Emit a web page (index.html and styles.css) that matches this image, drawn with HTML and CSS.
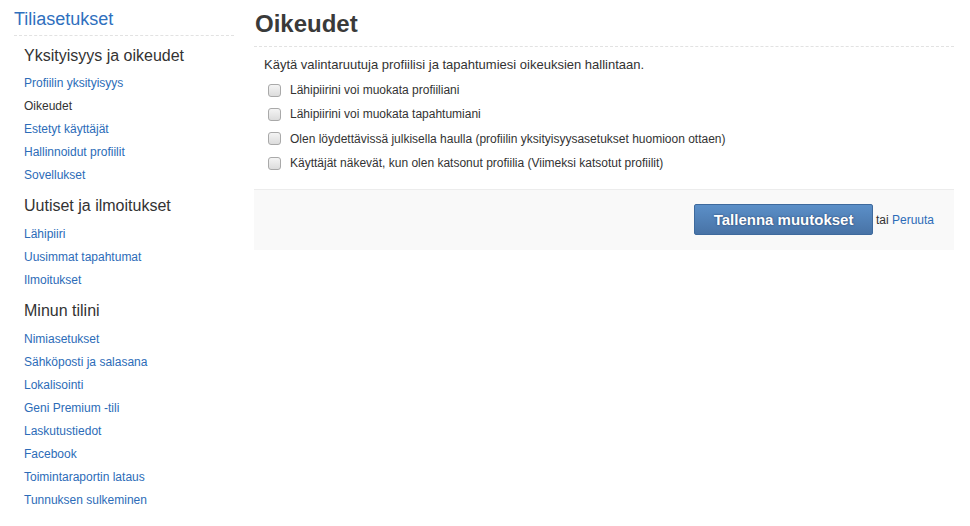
FILE: index.html
```html
<!DOCTYPE html>
<html lang="fi">
<head>
<meta charset="utf-8">
<title>Oikeudet</title>
<link rel="stylesheet" href="styles.css">
</head>
<body>
<div class="page">
  <aside class="sidebar">
    <div class="side-title"><a href="#">Tiliasetukset</a></div>
    <h3 class="side-head first">Yksityisyys ja oikeudet</h3>
    <ul class="side-list">
      <li><a href="#">Profiilin yksityisyys</a></li>
      <li class="current">Oikeudet</li>
      <li><a href="#">Estetyt käyttäjät</a></li>
      <li><a href="#">Hallinnoidut profiilit</a></li>
      <li><a href="#">Sovellukset</a></li>
    </ul>
    <h3 class="side-head">Uutiset ja ilmoitukset</h3>
    <ul class="side-list">
      <li><a href="#">Lähipiiri</a></li>
      <li><a href="#">Uusimmat tapahtumat</a></li>
      <li><a href="#">Ilmoitukset</a></li>
    </ul>
    <h3 class="side-head">Minun tilini</h3>
    <ul class="side-list">
      <li><a href="#">Nimiasetukset</a></li>
      <li><a href="#">Sähköposti ja salasana</a></li>
      <li><a href="#">Lokalisointi</a></li>
      <li><a href="#">Geni Premium -tili</a></li>
      <li><a href="#">Laskutustiedot</a></li>
      <li><a href="#">Facebook</a></li>
      <li><a href="#">Toimintaraportin lataus</a></li>
      <li><a href="#">Tunnuksen sulkeminen</a></li>
    </ul>
  </aside>
  <main class="main">
    <h1 class="page-title">Oikeudet</h1>
    <div class="content">
      <p class="desc">Käytä valintaruutuja profiilisi ja tapahtumiesi oikeuksien hallintaan.</p>
      <label class="row"><input type="checkbox" class="cb"><span>Lähipiirini voi muokata profiiliani</span></label>
      <label class="row"><input type="checkbox" class="cb"><span>Lähipiirini voi muokata tapahtumiani</span></label>
      <label class="row"><input type="checkbox" class="cb"><span>Olen löydettävissä julkisella haulla (profiilin yksityisyysasetukset huomioon ottaen)</span></label>
      <label class="row"><input type="checkbox" class="cb"><span>Käyttäjät näkevät, kun olen katsonut profiilia (Viimeksi katsotut profiilit)</span></label>
    </div>
    <div class="footer">
      <button class="btn" type="button">Tallenna muutokset</button>
      <span class="or">tai <a href="#">Peruuta</a></span>
    </div>
  </main>
</div>
</body>
</html>
```

FILE: styles.css
```css
* { box-sizing: border-box; }
html, body { margin: 0; padding: 0; background: #fff; }
body {
  font-family: "Liberation Sans", Arial, sans-serif;
  color: #333;
}
a { color: #2c6cb8; text-decoration: none; }

.page {
  display: flex;
  padding-left: 14px;
  gap: 20px;
}

.sidebar { width: 220px; flex: none; }
.side-title {
  font-size: 18px;
  line-height: 22px;
  padding-top: 8px;
  padding-bottom: 5px;
  border-bottom: 1px dashed #e2e2e2;
}
.side-title a { color: #2f70be; }
.side-head {
  margin: 9px 0 7px 10px;
  font-size: 16px;
  line-height: 20px;
  font-weight: normal;
  color: #333;
}
.side-head.first { margin-top: 10px; margin-bottom: 6px; }
.side-list {
  list-style: none;
  margin: 0;
  padding: 0 0 0 10px;
  font-size: 12px;
  line-height: 23px;
}
.side-list .current { color: #333; }

.main { width: 700px; flex: none; }
.page-title {
  margin: 0;
  padding: 10px 0 8px 1px;
  font-size: 24px;
  line-height: 28px;
  font-weight: bold;
  color: #3a3a3a;
  border-bottom: 1px dashed #e2e2e2;
}
.content { padding: 9px 10px 14px 10px; font-size: 13px; }
.desc { margin: 0 0 4px 0; line-height: 18px; }
.row {
  display: flex;
  align-items: center;
  height: 24.3px;
  padding-left: 4px;
  font-size: 12px;
}
.cb {
  appearance: none;
  -webkit-appearance: none;
  width: 13px;
  height: 13px;
  margin: 0 9px 0 0;
  border: 1px solid #a9a9a9;
  border-radius: 3px;
  background: linear-gradient(#f4f4f4, #dcdcdc);
  flex: none;
}

.footer {
  border-top: 1px solid #ececec;
  background: #f9f9f9;
  height: 61px;
  display: flex;
  justify-content: flex-end;
  align-items: center;
  padding-right: 20px;
  padding-bottom: 1px;
}
.btn {
  font-family: "Liberation Sans", Arial, sans-serif;
  font-size: 15px;
  font-weight: bold;
  color: #fff;
  height: 31px;
  padding: 0 18.5px;
  border: 1px solid #3e6a9d;
  border-radius: 2px;
  background: linear-gradient(#5b8fc8, #4873a6);
  text-shadow: 0 0 2px rgba(20, 40, 80, 0.8);
  cursor: pointer;
}
.or { font-size: 12px; margin-left: 3px; color: #333; }
```
